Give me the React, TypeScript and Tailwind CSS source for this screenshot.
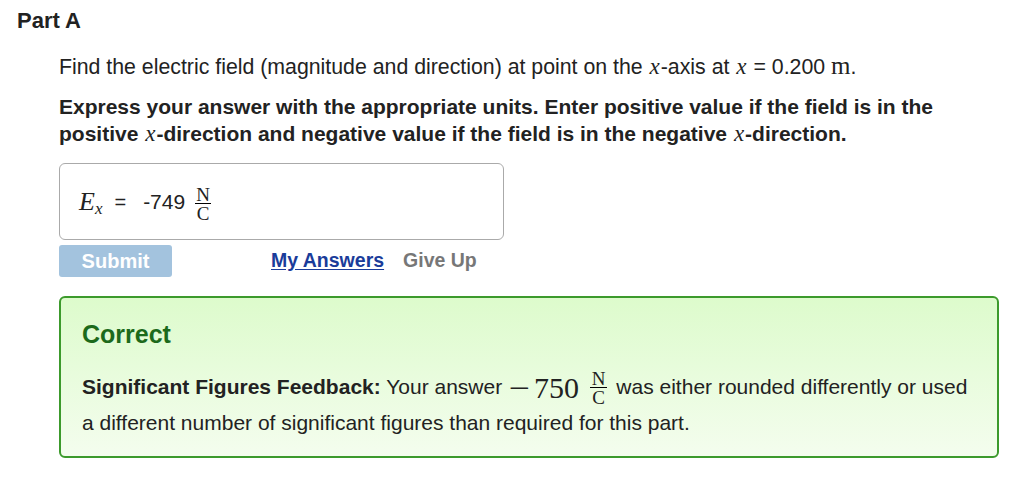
const MathX = () => (
  <span className="italic font-['Liberation_Serif',serif] text-[23px] font-normal mx-[1px]">x</span>
);

const Frac = () => (
  <span className="inline-flex flex-col items-center align-middle font-['Liberation_Serif',serif] font-normal text-[19px] leading-[17px]">
    <span className="px-[2px]">N</span>
    <span className="px-[2px] border-t border-black pt-[1px]">C</span>
  </span>
);

export default function App() {
  return (
    <div className="w-[1024px] h-[487px] bg-white text-[#222] font-['Liberation_Sans',Arial,sans-serif] overflow-hidden">
      <h2 className="pl-[17px] pt-[7px] text-[22px] font-bold leading-[28px]">Part A</h2>

      <div className="pl-[59px] pr-[20px]">
        <p className="mt-[17px] text-[21.3px] leading-[28px] whitespace-nowrap">
          Find the electric field (magnitude and direction) at point on the <MathX />-axis at <MathX /> = 0.200{" "}
          <span className="font-['Liberation_Serif',serif] text-[25px]">m</span>.
        </p>

        <p className="mt-[12px] text-[21px] leading-[27px] font-bold whitespace-nowrap">
          Express your answer with the appropriate units. Enter positive value if the field is in the
          <br />
          positive <MathX />-direction and negative value if the field is in the negative <MathX />-direction.
        </p>

        <div className="mt-[16px] w-[445px] h-[77px] border border-[#aaa] rounded-[6px] flex items-center pl-[19px]">
          <span className="flex items-baseline font-['Liberation_Serif',serif] italic">
            <span className="text-[26px]">E</span>
            <span className="text-[17px] relative top-[4px]">x</span>
          </span>
          <span className="text-[20px] ml-[12px]">=</span>
          <span className="text-[21px] ml-[17px]">-749</span>
          <span className="ml-[9px] mt-[4px]">
            <Frac />
          </span>
        </div>

        <div className="mt-[5px] flex items-center">
          <button className="w-[113px] h-[32px] rounded-[3px] bg-[#a3c3de] text-white font-bold text-[20px]">
            Submit
          </button>
          <a className="ml-[99px] text-[#1a3c9a] underline underline-offset-2 font-bold text-[19.5px]">My Answers</a>
          <span className="ml-[19px] text-[#777] font-bold text-[19.5px]">Give Up</span>
        </div>

        <div className="mt-[19px] w-[940px] h-[162px] rounded-[6px] border-2 border-[#3c9a2c] bg-gradient-to-b from-[#ddfbcc] to-[#f4fdee] pl-[21px] pt-[20px]">
          <h3 className="text-[25px] font-bold text-[#1c6a1b] leading-[32px]">Correct</h3>
          <p className="mt-[20px] text-[21px] leading-[34px] whitespace-nowrap">
            <span className="font-bold">Significant Figures Feedback:</span> Your answer{" "}
            <span className="font-['Liberation_Serif',serif] text-[30px] align-middle ml-[3px]">
              <span className="inline-block scale-x-125 mr-[6px]">−</span>750
            </span>{" "}
            <span className="ml-[5px]">
              <Frac />
            </span>{" "}
            <span className="ml-[3px]">was either rounded differently or used</span>
            <br />a different number of significant figures than required for this part.
          </p>
        </div>
      </div>
    </div>
  );
}
